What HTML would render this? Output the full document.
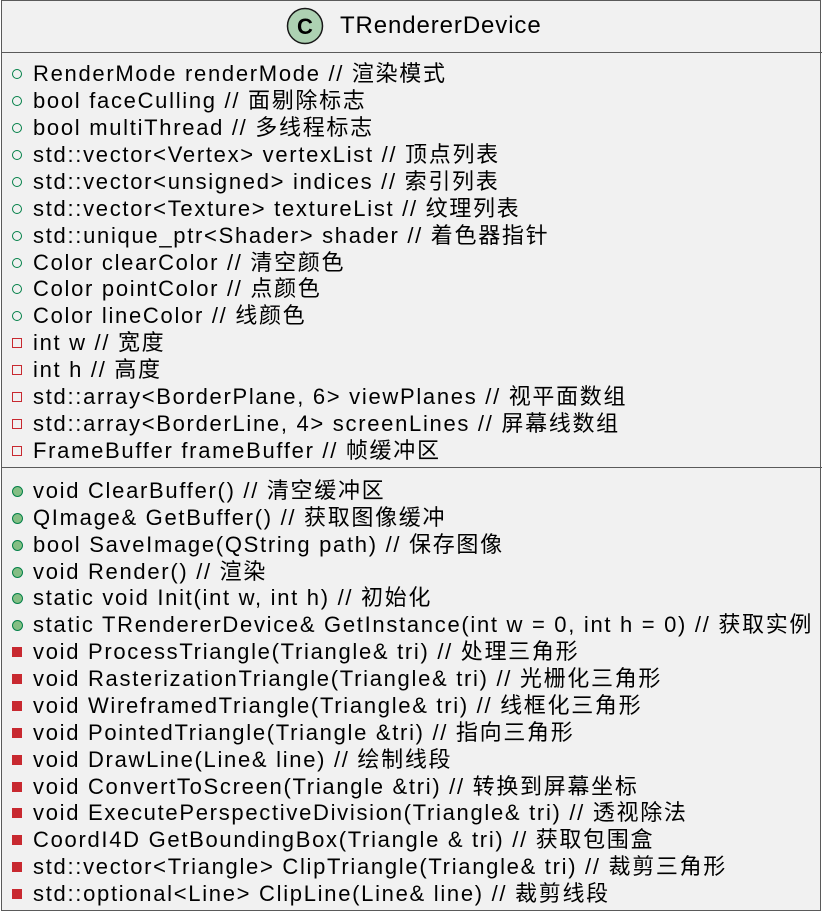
<!DOCTYPE html>
<html><head><meta charset="utf-8"><style>
body{margin:0;background:#fff;width:824px;height:914px;overflow:hidden;font-family:"Liberation Sans","Noto Sans CJK SC",sans-serif;}
.box{position:absolute;left:1px;top:0;width:820px;height:911px;background:#f1f1f1;border:1.5px solid #5a5a5a;box-sizing:border-box;}
.sep{position:absolute;left:1px;width:821px;height:0;border-top:1.5px solid #5a5a5a;}
.r{position:absolute;left:33px;height:27px;line-height:27px;font-size:22px;letter-spacing:1.7px;color:#000;white-space:nowrap;}
.i{position:absolute;left:12px;width:10px;height:10px;box-sizing:border-box;}
.pa{border:1.5px solid #038048;border-radius:50%;width:10px;height:10px;}
.pv{border:1.5px solid #c82930;width:10px;height:10px;}
.ma{background:#84be84;border:1.5px solid #038048;border-radius:50%;width:11px;height:11px;}
.mv{background:#c82930;border:1.5px solid #c82930;}
</style></head><body>
<div class="box"></div>
<div class="sep" style="top:52px"></div>
<div class="sep" style="top:467px"></div>
<svg style="position:absolute;left:286px;top:7px" width="40" height="40"><circle cx="19" cy="19" r="17.5" fill="#add1b2" stroke="#181818" stroke-width="1.5"/><text x="19" y="27" text-anchor="middle" font-family="Liberation Sans" font-weight="bold" font-size="22">C</text></svg>
<div class="r" style="left:340px;top:12px;font-size:24px;letter-spacing:0.9px;">TRendererDevice</div>
<div id="c"></div>
<script>
var a=[["pa","RenderMode renderMode // 渲染模式"],["pa","bool faceCulling // 面剔除标志"],["pa","bool multiThread // 多线程标志"],["pa","std::vector&lt;Vertex&gt; vertexList // 顶点列表"],["pa","std::vector&lt;unsigned&gt; indices // 索引列表"],["pa","std::vector&lt;Texture&gt; textureList // 纹理列表"],["pa","std::unique_ptr&lt;Shader&gt; shader // 着色器指针"],["pa","Color clearColor // 清空颜色"],["pa","Color pointColor // 点颜色"],["pa","Color lineColor // 线颜色"],["pv","int w // 宽度"],["pv","int h // 高度"],["pv","std::array&lt;BorderPlane, 6&gt; viewPlanes // 视平面数组"],["pv","std::array&lt;BorderLine, 4&gt; screenLines // 屏幕线数组"],["pv","FrameBuffer frameBuffer // 帧缓冲区"]];
var m=[["ma","void ClearBuffer() // 清空缓冲区"],["ma","QImage&amp; GetBuffer() // 获取图像缓冲"],["ma","bool SaveImage(QString path) // 保存图像"],["ma","void Render() // 渲染"],["ma","static void Init(int w, int h) // 初始化"],["ma","static TRendererDevice&amp; GetInstance(int w = 0, int h = 0) // 获取实例"],["mv","void ProcessTriangle(Triangle&amp; tri) // 处理三角形"],["mv","void RasterizationTriangle(Triangle&amp; tri) // 光栅化三角形"],["mv","void WireframedTriangle(Triangle&amp; tri) // 线框化三角形"],["mv","void PointedTriangle(Triangle &amp;tri) // 指向三角形"],["mv","void DrawLine(Line&amp; line) // 绘制线段"],["mv","void ConvertToScreen(Triangle &amp;tri) // 转换到屏幕坐标"],["mv","void ExecutePerspectiveDivision(Triangle&amp; tri) // 透视除法"],["mv","CoordI4D GetBoundingBox(Triangle &amp; tri) // 获取包围盒"],["mv","std::vector&lt;Triangle&gt; ClipTriangle(Triangle&amp; tri) // 裁剪三角形"],["mv","std::optional&lt;Line&gt; ClipLine(Line&amp; line) // 裁剪线段"]];
var h="";
function add(list,y0,p){for(var k=0;k<list.length;k++){var c=y0+k*p;h+='<div class="i '+list[k][0]+'" style="top:'+(c-5)+'px"></div><div class="r" style="top:'+(c-14)+'px">'+list[k][1]+'</div>';}}
add(a,74,26.93);add(m,491,26.87);
document.getElementById("c").innerHTML=h;
</script>
</body></html>
